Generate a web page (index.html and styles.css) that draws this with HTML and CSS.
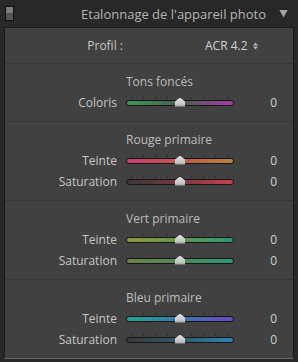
FILE: index.html
```html
<!DOCTYPE html>
<html>

<head>
    <title>Etalonnage de l'appareil photo</title>
    <link rel="stylesheet" href="styles.css">
</head>

<body>
    <div class="header">
        <span class="toggle"></span>
        <span class="title">Etalonnage de l'appareil photo</span>
        <span class="collapse"></span>
    </div>
    <div class="panel">
        <div class="profile">
            <span class="profile-label">Profil :</span>
            <span class="profile-value">ACR 4.2
                <svg class="updown" width="5" height="8" viewBox="0 0 5 8">
                    <path d="M0 3.5 L2.5 0.5 L5 3.5 Z M0 4.5 L2.5 7.5 L5 4.5 Z" fill="#b8b8b8"/>
                </svg>
            </span>
        </div>

        <div class="group">
            <div class="group-title">Tons foncés</div>
            <div class="row">
                <span class="label">Coloris</span>
                <div class="slider coloris"></div>
                <span class="value">0</span>
            </div>
        </div>

        <div class="group">
            <div class="group-title">Rouge primaire</div>
            <div class="row">
                <span class="label">Teinte</span>
                <div class="slider red-hue"></div>
                <span class="value">0</span>
            </div>
            <div class="row">
                <span class="label">Saturation</span>
                <div class="slider red-sat"></div>
                <span class="value">0</span>
            </div>
        </div>

        <div class="group">
            <div class="group-title">Vert primaire</div>
            <div class="row">
                <span class="label">Teinte</span>
                <div class="slider green-hue"></div>
                <span class="value">0</span>
            </div>
            <div class="row">
                <span class="label">Saturation</span>
                <div class="slider green-sat"></div>
                <span class="value">0</span>
            </div>
        </div>

        <div class="group">
            <div class="group-title">Bleu primaire</div>
            <div class="row">
                <span class="label">Teinte</span>
                <div class="slider blue-hue"></div>
                <span class="value">0</span>
            </div>
            <div class="row">
                <span class="label">Saturation</span>
                <div class="slider blue-sat"></div>
                <span class="value">0</span>
            </div>
        </div>
    </div>
</body>

</html>
```

FILE: styles.css
```css
body {
    margin: 0;
    background-color: #282828;
    font-family: "Open Sans", "Noto Sans", sans-serif;
    font-size: 12px;
    color: #c6c6c6;
}

.header {
    height: 27px;
    display: flex;
    align-items: center;
    padding: 0 10px 0 5px;
}

.toggle {
    width: 9px;
    height: 15px;
    box-sizing: border-box;
    border: 1px solid #101010;
    background: linear-gradient(#7c7c7c 50%, #555 50%);
}

.title {
    margin-left: auto;
    font-size: 13px;
    color: #b4b4b4;
}

.collapse {
    width: 9px;
    height: 8px;
    margin-left: 13px;
    background-color: #a2a2a2;
    clip-path: polygon(0 0, 100% 0, 50% 100%);
}

.panel {
    margin: 0 4px;
    border: 1px solid #1a1a1a;
    border-bottom-color: #6a6a6a;
    background-color: #414141;
}

.profile {
    height: 35px;
    display: flex;
    align-items: center;
}

.profile-label {
    width: 118px;
    text-align: right;
}

.profile-value {
    margin-left: 82px;
    color: #d2d2d2;
}

.updown {
    margin-left: 2px;
}

.group {
    border-top: 1px solid #353535;
    padding: 8px 0;
}

.group-title {
    height: 20px;
    line-height: 20px;
    padding-left: 121px;
    color: #bdbdbd;
}

.row {
    display: grid;
    grid-template-columns: 112px 108px 1fr;
    column-gap: 9px;
    height: 21px;
    align-items: center;
}

.row .label {
    text-align: right;
}

.row .value {
    text-align: right;
    padding-right: 16px;
    color: #d0d0d0;
}

.slider {
    position: relative;
    height: 4px;
    border: 1px solid #161616;
    border-radius: 3px;
}

/* tick marks */
.slider::before {
    content: "";
    position: absolute;
    left: -1px;
    right: -1px;
    top: -4px;
    height: 2px;
    background: repeating-linear-gradient(to right, transparent 0 5px, #2c2c2c 5px 6px, transparent 6px 12px);
}

/* thumb */
.slider::after {
    content: "";
    position: absolute;
    left: calc(50% - 5px);
    top: -3px;
    width: 10px;
    height: 9px;
    background: linear-gradient(#e2e2e2, #c4c4c4 70%, #9a9a9a);
    clip-path: polygon(50% 0, 100% 45%, 100% 100%, 0 100%, 0 45%);
}

.slider.coloris {
    background: linear-gradient(90deg, #3c9a52, #4e5c50 50%, #a13e9e);
}

.slider.red-hue {
    background: linear-gradient(90deg, #c8407a, #c05848 50%, #b8863a);
}

.slider.red-sat {
    background: linear-gradient(90deg, #383434, #7a3a40 50%, #c8404e);
}

.slider.green-hue {
    background: linear-gradient(90deg, #8c9a40, #64984c 50%, #2a9878);
}

.slider.green-sat {
    background: linear-gradient(90deg, #6f7e45, #4a8a5a 50%, #2a9878);
}

.slider.blue-hue {
    background: linear-gradient(90deg, #1fa88e, #3a78b0 50%, #6a48c0);
}

.slider.blue-sat {
    background: linear-gradient(90deg, #383838, #305a70 50%, #2a88b0);
}
```
